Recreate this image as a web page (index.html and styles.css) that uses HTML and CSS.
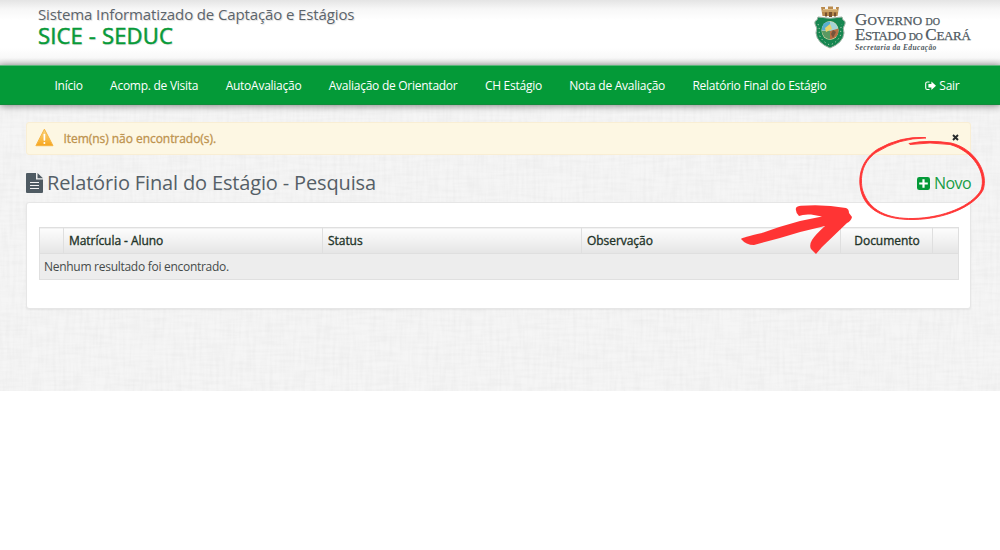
FILE: index.html
```html
<!DOCTYPE html>
<html lang="pt-BR">
<head>
<meta charset="utf-8">
<title>SICE - SEDUC</title>
<link rel="stylesheet" href="styles.css">
</head>
<body>
<div class="page">
  <svg class="texture" width="1000" height="391" aria-hidden="true">
    <filter id="weave-h" x="0" y="0" width="100%" height="100%">
      <feTurbulence type="fractalNoise" baseFrequency="0.035 0.3" numOctaves="2" seed="4"/>
      <feColorMatrix values="0 0 0 0 0  0 0 0 0 0  0 0 0 0 0  0.09 0 0 0 -0.031"/>
    </filter>
    <filter id="weave-v" x="0" y="0" width="100%" height="100%">
      <feTurbulence type="fractalNoise" baseFrequency="0.3 0.035" numOctaves="2" seed="9"/>
      <feColorMatrix values="0 0 0 0 0  0 0 0 0 0  0 0 0 0 0  0.09 0 0 0 -0.031"/>
    </filter>
    <rect width="1000" height="391" filter="url(#weave-h)"/>
    <rect width="1000" height="391" filter="url(#weave-v)"/>
  </svg>

  <header class="header">
    <div class="brand">
      <span class="brand-system">Sistema Informatizado de Captação e Estágios</span>
      <span class="brand-name">SICE - SEDUC</span>
    </div>
    <div class="gov">
      <svg class="crest" width="32" height="44" viewBox="0 0 32 44">
        <path d="M7 2h4v2h3V1.500h5V4h3V2h3l-1.500 9H8.500z" fill="#b98a4d"/>
        <path d="M8 6h16M9 4.500h14" stroke="#e0bd83" stroke-width="1"/>
        <path d="M11 7.500h2v4h-2zM15 7h3v5h-3zM20 7.500h2v4h-2z" fill="#765031"/>
        <path d="M4 12q12 2.500 24 0l1 3q3 1 2 4-3 4-1 9-1 10-14 15Q3 38 2 28q2-5-1-9-1-3 2-4z" fill="#168650" stroke="#9aaf9f" stroke-width="1"/>
        <path d="M4 19q2 5 1 10 3 8 11 11 8-3 11-11-1-5 1-10" fill="none" stroke="#c9ddc4" stroke-width="1" stroke-dasharray="1.200 2.800"/>
        <ellipse cx="16" cy="25.500" rx="8.500" ry="9.500" fill="#d9d6a8"/>
        <path d="M8 23Q9 16.500 16 16.500v9H7.800z" fill="#58aed0"/>
        <path d="M16 16.500q7 1 8 7.500L16 27z" fill="#a5d3d6"/>
        <path d="M7.800 26H16v8.500q-7-1-8.200-8.500z" fill="#5b9962"/>
        <path d="M16 26l8.500-2.500q1 9-8.500 11z" fill="#b66e43"/>
        <path d="M11 23l5-4 2 5-6 3z" fill="#ead26a"/>
        <path d="M19 25l3 2-3 6-2-4z" fill="#75543b"/>
      </svg>
      <div class="gov-text">
        <span class="gov-line l1"><b>G</b>OVERNO <i>DO</i></span>
        <span class="gov-line l2"><b>E</b>STADO <i>DO</i> <b>C</b>EARÁ</span>
        <span class="gov-dept">Secretaria da Educação</span>
      </div>
    </div>
  </header>

  <nav class="nav">
    <a>Início</a>
    <a>Acomp. de Visita</a>
    <a>AutoAvaliação</a>
    <a>Avaliação de Orientador</a>
    <a>CH Estágio</a>
    <a>Nota de Avaliação</a>
    <a>Relatório Final do Estágio</a>
    <a class="exit"><svg width="11" height="10" viewBox="0 0 11 10"><path d="M4.500 1H2.300Q.7 1 .7 2.600v4.300q0 1.600 1.600 1.600h2.200" fill="none" stroke="#fff" stroke-width="1.100"/><path d="M3.400 3h3V.5L11 4.800 6.400 9V6.600h-3z" fill="#fff"/></svg>Sair</a>
  </nav>

  <main class="main">
    <div class="alert">
      <svg width="19" height="19" viewBox="0 0 19 19">
        <defs><linearGradient id="amber" x2="0" y2="1"><stop stop-color="#fbd984"/><stop offset="1" stop-color="#f7a51c"/></linearGradient></defs>
        <path d="M9.400 1.200L18 17.700H.9z" fill="url(#amber)" stroke="#f5b443" stroke-width="1" stroke-linejoin="round"/>
        <path d="M9.400 6.500v5.500" stroke="#fff" stroke-width="1.700" stroke-linecap="round"/><circle cx="9.400" cy="15" r="1" fill="#fff"/>
      </svg>
      <span class="alert-text">Item(ns) não encontrado(s).</span>
      <svg class="close" width="7" height="7" viewBox="0 0 7 7"><path d="M1 1l5 5M6 1L1 6" stroke="#262a2b" stroke-width="1.900"/></svg>
    </div>

    <div class="title-row">
      <svg width="17" height="20" viewBox="0 0 17 20"><path d="M1 0h9v6.500h7V19q0 1-1 1H1q-1 0-1-1V1q0-1 1-1z" fill="#4f5b63"/><path d="M11.500 0L17 5.300h-5.500z" fill="#4f5b63"/><path d="M4 9.500h9M4 12.500h9M4 15.500h9" stroke="#f3f3f3" stroke-width="1.200"/></svg>
      <h1>Relatório Final do Estágio - Pesquisa</h1>
      <a class="new"><svg width="13" height="13" viewBox="0 0 13 13"><rect width="13" height="13" rx="2.300" fill="#049a38"/><path d="M6.500 2.200v8.600M2.200 6.500h8.600" stroke="#fff" stroke-width="2.200"/></svg><span>Novo</span></a>
    </div>

    <section class="panel">
      <table class="grid">
        <colgroup><col class="c1"><col class="c2"><col class="c3"><col class="c4"><col class="c5"><col class="c6"></colgroup>
        <thead><tr><th></th><th>Matrícula - Aluno</th><th>Status</th><th>Observação</th><th class="doc">Documento</th><th></th></tr></thead>
        <tbody><tr><td colspan="6">Nenhum resultado foi encontrado.</td></tr></tbody>
      </table>
    </section>
  </main>

  <svg class="marks" width="1000" height="391" viewBox="0 0 1000 391" aria-hidden="true">
    <path d="M741 239Q742 237.500 762 233Q781 226 800 221L822 216.500L811 214.500Q803 214 799 216Q795 212 796 208Q797 206 801 205.800Q824 204 846 208Q849 209 849 213L852 217Q851 221 847 223L822 247L816 254L811 249Q809 245 812 240Q815 235 825 226Q802 231 780 238L754 245Q746 245 741 239Z" fill="#ff3434"/>
    <path d="M926 138Q899 138 876 152.500C861 163 860 179 862.500 190C869 211 888 219 913 218.500C943 218 972 206 981 190C987 173 973 151 950 144.500Q930 141.500 910 144.500L909 143.500Q928 139.500 951 143C976 149 989 174 983 190C974 207 944 219 914 219.500C886 220 866 211 861 191C856 169 868 155 878 149Q901 136 925 137.500Z" fill="#ff3434" stroke="#ff3434" stroke-width=".9"/>
  </svg>
</div>
</body>
</html>
```
FILE: styles.css
```css
* { box-sizing: border-box; }
body { margin: 0; background: #fff; font-family: "Open Sans", sans-serif; }
.page { position: relative; height: 391px; background: #f5f5f5; overflow: hidden; }
.texture, .marks { position: absolute; top: 0; left: 0; pointer-events: none; }
.texture { opacity: .42; }
.header { position: relative; height: 65px; padding: 5px 28px 0 38px; display: flex; justify-content: space-between; background: linear-gradient(#e4e4e4 0, #f7f7f7 9px, #fff 20px, #fff 48px, #f8f8f8 58px, #dedede 65px); }
.brand { display: flex; flex-direction: column; white-space: nowrap; text-shadow: 1px 1px 1px #ddd; }
.brand-system { height: 19px; line-height: 19px; font-size: 15px; letter-spacing: -0.12px; color: #5c646b; }
.brand-name { height: 23px; line-height: 23px; font-size: 22px; letter-spacing: .17px; color: #079a38; -webkit-text-stroke: .5px #079a38; }
.gov { display: flex; gap: 9px; width: 158px; white-space: nowrap; }
.crest { flex: none; }
.gov-text { display: flex; flex-direction: column; padding-top: 7px; font-family: "Liberation Serif", serif; color: #4f5961; -webkit-text-stroke: .25px #4f5961; }
.gov-line { height: 15px; line-height: 15px; font-size: 13px; letter-spacing: -.33px; }
.gov-line b { font-size: 17px; font-weight: 400; line-height: 15px; }
.gov-line i { font-size: 10px; font-style: normal; }
.gov-line.l1 { letter-spacing: .1px; }
.gov-dept { padding-top: 1px; font-size: 7.5px; letter-spacing: .36px; line-height: 10px; font-weight: 700; font-style: italic; -webkit-text-stroke: 0; }
.nav { position: relative; height: 40px; display: flex; align-items: center; gap: 27.4px; padding: 1px 40.500px 0 54.500px; background: #049a38; border-top: 1px solid #5bb67b; border-bottom: 1px solid #128b3b; box-shadow: 0 1px 7px rgba(0,0,0,.45); color: #fff; font-size: 12px; letter-spacing: -.26px; line-height: 18px; white-space: nowrap; }
.exit { display: flex; align-items: center; gap: 3px; margin-left: auto; }
.main { position: relative; padding: 17px 29px 0 26px; }
.alert { height: 33px; display: flex; align-items: center; padding: 0 11px 3px 8px; border: 1px solid #f9eed4; border-radius: 3px; background: #fdf7e3; color: #bd934e; }
.alert-text { margin: 3px 0 0 9.500px; font-size: 12px; letter-spacing: -.05px; -webkit-text-stroke: .3px #bd934e; }
.close { margin-left: auto; }
.title-row { height: 47px; display: flex; align-items: center; padding-top: 9px; }
h1 { margin: 0 0 0 4px; font-size: 20px; letter-spacing: -.15px; line-height: 28px; font-weight: 400; color: #555f67; white-space: nowrap; }
.new { display: flex; align-items: center; gap: 4px; margin-left: auto; color: #189d46; font-size: 16px; letter-spacing: -.6px; line-height: 22px; }
.panel { height: 107px; padding: 24px 12px 0; background: #fff; border: 1px solid #e6e6e6; border-radius: 3px; box-shadow: 0 1px 2px rgba(0,0,0,.06); }
.grid { width: 919px; height: 52px; table-layout: fixed; border-collapse: collapse; border: 1px solid #e0e0e0; font-size: 12px; line-height: 18px; white-space: nowrap; }
.c1 { width: 24px; } .c2, .c3, .c4 { width: 259px; } .c5 { width: 92px; } .c6 { width: 26px; }
.grid th { height: 26px; padding: 0 4px 0 5px; text-align: left; font-weight: 400; letter-spacing: -.05px; color: #1f3429; -webkit-text-stroke: .35px #1f3429; background: linear-gradient(#fdfdfd, #e5e5e5); border: 1px solid #dfdfdf; }
.grid th.doc { text-align: center; }
.grid td { height: 26px; padding: 0 4px; letter-spacing: -.28px; background: #ededed; color: #454b4a; }
```
